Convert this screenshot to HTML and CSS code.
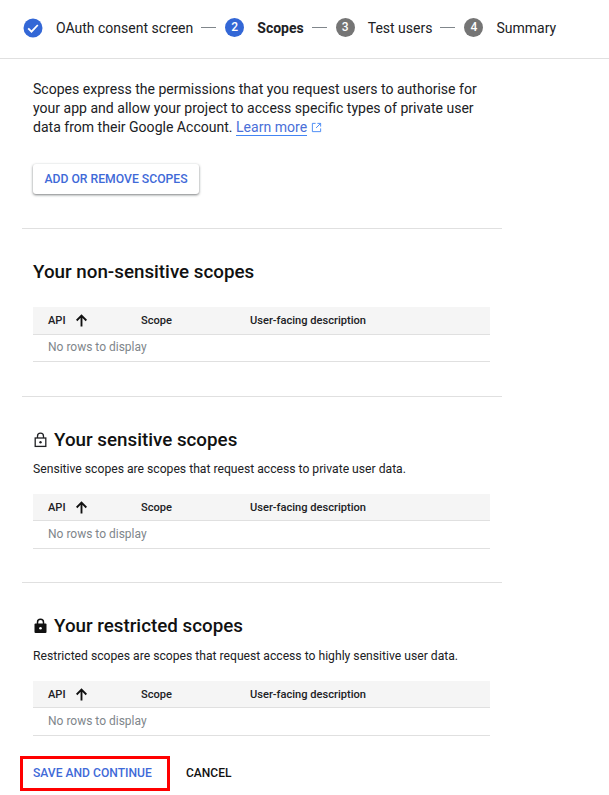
FILE: index.html
```html
<!DOCTYPE html>
<html lang="en">
<head>
    <meta charset="UTF-8">
    <title>Edit app registration - Scopes</title>
    <link rel="stylesheet" href="styles.css">
</head>
<body>
    <div class="stepper">
        <svg class="step-icon" viewBox="0 0 20 20">
            <circle cx="10" cy="10" r="9.5" fill="#3367d6"/>
            <path d="M5.2 10.3l3.3 3.3 6.3-6.6" fill="none" stroke="#fff" stroke-width="1.8"/>
        </svg>
        <span class="step-label">OAuth consent screen</span>
        <span class="step-line"></span>
        <span class="step-num active">2</span>
        <span class="step-label current">Scopes</span>
        <span class="step-line"></span>
        <span class="step-num">3</span>
        <span class="step-label">Test users</span>
        <span class="step-line"></span>
        <span class="step-num">4</span>
        <span class="step-label">Summary</span>
    </div>

    <div class="content">
        <div class="intro">
            <p>Scopes express the permissions that you request users to authorise for your app and allow your project to access specific types of private user data from their Google Account. <a class="learn" href="#">Learn more</a>
                <svg class="ext-icon" viewBox="0 0 12 12">
                    <path d="M5 1.5H1.5v9h9V7M7 1.5h3.5V5M10.5 1.5L5.5 6.5" fill="none" stroke="#4285f4" stroke-width="1"/>
                </svg>
            </p>
            <button class="raised-btn">ADD OR REMOVE SCOPES</button>
        </div>

        <section class="scope-section">
            <h2>Your non-sensitive scopes</h2>
            <div class="scope-table first-table">
                <div class="table-head">
                    <span class="col-api">API
                        <svg class="sort-icon" viewBox="0 0 14 14"><path d="M7 13.5V2M1.8 7L7 1.8 12.2 7" fill="none" stroke="#111111" stroke-width="2"/></svg>
                    </span>
                    <span class="col-scope">Scope</span>
                    <span>User-facing description</span>
                </div>
                <div class="table-empty">No rows to display</div>
            </div>
        </section>

        <section class="scope-section">
            <h2>
                <svg class="lock-icon" viewBox="0 0 14 16">
                    <path d="M4 6V4.2a3 3 0 0 1 6 0V6" fill="none" stroke="#202124" stroke-width="1.3"/>
                    <rect x="1.7" y="6" width="10.6" height="8.4" fill="none" stroke="#202124" stroke-width="1.3"/>
                    <circle cx="7" cy="10.2" r="1.2" fill="#202124"/>
                </svg>
                Your sensitive scopes
            </h2>
            <p class="scope-note">Sensitive scopes are scopes that request access to private user data.</p>
            <div class="scope-table">
                <div class="table-head">
                    <span class="col-api">API
                        <svg class="sort-icon" viewBox="0 0 14 14"><path d="M7 13.5V2M1.8 7L7 1.8 12.2 7" fill="none" stroke="#111111" stroke-width="2"/></svg>
                    </span>
                    <span class="col-scope">Scope</span>
                    <span>User-facing description</span>
                </div>
                <div class="table-empty">No rows to display</div>
            </div>
        </section>

        <section class="scope-section">
            <h2>
                <svg class="lock-icon" viewBox="0 0 14 16">
                    <path d="M4 6V4.2a3 3 0 0 1 6 0V6" fill="none" stroke="#111111" stroke-width="1.5"/>
                    <rect x="1" y="5.4" width="12" height="9.6" rx="1" fill="#111111"/>
                    <circle cx="7" cy="10.2" r="1.3" fill="#fff"/>
                </svg>
                Your restricted scopes
            </h2>
            <p class="scope-note">Restricted scopes are scopes that request access to highly sensitive user data.</p>
            <div class="scope-table">
                <div class="table-head">
                    <span class="col-api">API
                        <svg class="sort-icon" viewBox="0 0 14 14"><path d="M7 13.5V2M1.8 7L7 1.8 12.2 7" fill="none" stroke="#111111" stroke-width="2"/></svg>
                    </span>
                    <span class="col-scope">Scope</span>
                    <span>User-facing description</span>
                </div>
                <div class="table-empty">No rows to display</div>
            </div>
        </section>

        <div class="actions">
            <button class="save-btn">SAVE AND CONTINUE</button>
            <button class="cancel-btn">CANCEL</button>
        </div>
    </div>
</body>
</html>
```
FILE: styles.css
```css
* {
    box-sizing: border-box;
}
body {
    margin: 0;
    background-color: #ffffff;
    color: #202124;
    font-family: Roboto, "Liberation Sans", sans-serif;
    height: 795px;
    overflow: hidden;
}
.stepper {
    display: flex;
    align-items: center;
    height: 59px;
    padding: 0 0 3px 23px;
    border-bottom: 1px solid #e0e0e0;
    font-size: 14px;
}
.step-icon {
    width: 20px;
    height: 20px;
}
.step-label {
    margin-left: 13px;
}
.current {
    font-weight: 700;
}
.step-line {
    width: 15px;
    height: 1px;
    margin: 0 9px 0 8px;
    background-color: #80868b;
}
.step-num {
    width: 19px;
    height: 19px;
    border-radius: 50%;
    background-color: #757575;
    color: #ffffff;
    font-size: 12px;
    font-weight: 500;
    line-height: 19px;
    text-align: center;
}
.step-num.active {
    background-color: #3367d6;
}
.content {
    width: 480px;
    margin-left: 22px;
}
.intro {
    padding: 21px 0 30px 11px;
    height: 169px;
}
.intro p {
    margin: 0;
    width: 450px;
    font-size: 14.05px;
    line-height: 19px;
}
.learn {
    color: #4a6fd8;
    text-decoration: none;
    border-bottom: 1px solid #4285f4;
}
.ext-icon {
    width: 11px;
    height: 11px;
    vertical-align: -1px;
}
.raised-btn {
    display: block;
    margin-top: 27px;
    width: 166px;
    height: 30px;
    border: none;
    border-radius: 3px;
    background-color: #ffffff;
    color: #3f6ad8;
    font-family: inherit;
    font-size: 12.2px;
    font-weight: 500;
    box-shadow: 0 1px 3px rgba(60, 64, 67, 0.45), 0 1px 2px rgba(60, 64, 67, 0.3);
}
.scope-section {
    border-top: 1px solid #e0e0e0;
    padding: 32px 12px 34px 11px;
}
.scope-section:nth-of-type(2) {
    padding-bottom: 33px;
}
.scope-section h2 {
    display: flex;
    align-items: center;
    gap: 6px;
    margin: 0;
    height: 22px;
    font-size: 18.8px;
    font-weight: 500;
    color: #111111;
}
.lock-icon {
    width: 15px;
    height: 16px;
}
.scope-note {
    margin: 9px 0 0;
    font-size: 12.16px;
    line-height: 18px;
}
.scope-section:last-of-type .scope-note {
    margin-top: 10px;
}
.scope-table {
    margin-top: 16px;
    font-size: 12px;
}
.first-table {
    margin-top: 24px;
}
.table-head {
    display: flex;
    align-items: center;
    height: 27px;
    padding-left: 15px;
    background-color: #f5f5f5;
    border-bottom: 1px solid #e0e0e0;
    font-size: 11.1px;
    font-weight: 500;
}
.first-table .table-head {
    height: 28px;
}
.col-api {
    display: flex;
    align-items: center;
    gap: 9px;
    width: 93px;
}
.col-scope {
    width: 109px;
}
.sort-icon {
    width: 13px;
    height: 13px;
}
.table-empty {
    height: 28px;
    padding-left: 15px;
    border-bottom: 1px solid #e0e0e0;
    color: #80868b;
    line-height: 26px;
}
.first-table .table-empty {
    height: 27px;
    line-height: 25px;
}
.scope-section:last-of-type {
    padding-bottom: 0;
}
.actions {
    display: flex;
    align-items: center;
    margin-top: 20px;
    margin-left: -2px;
}
.save-btn {
    width: 150px;
    height: 35px;
    border: 3px solid #ff0000;
    background-color: #ffffff;
    color: #3f6ad8;
    font-family: inherit;
    font-size: 12.1px;
    font-weight: 500;
    padding: 0 0 1px 10px;
    text-align: left;
}
.cancel-btn {
    margin-left: 6px;
    padding: 0 10px 1px;
    border: none;
    background: none;
    color: #111111;
    font-family: inherit;
    font-size: 12px;
    font-weight: 500;
}
```
